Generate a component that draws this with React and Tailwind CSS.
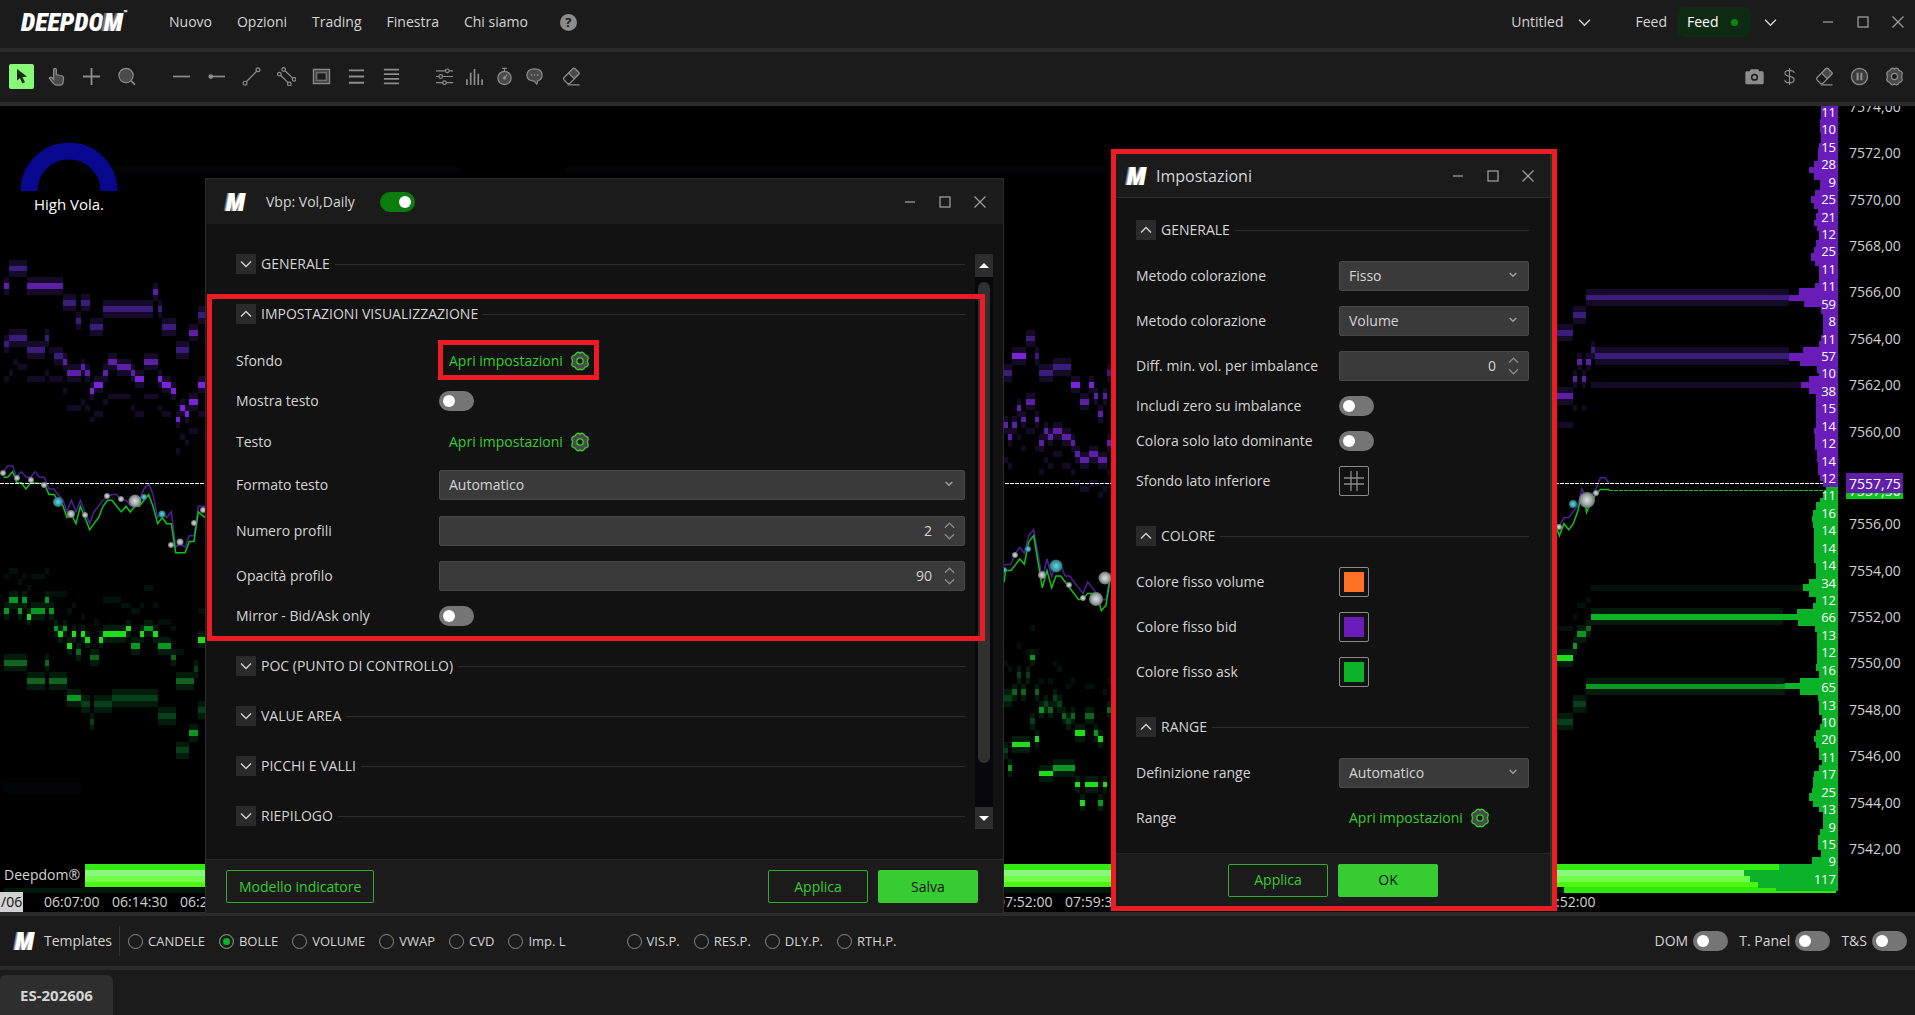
import React, { useState } from "react";

// [x, y, width] in heat map units, y is the top of the strong row
const LEFT_BID = {
  mid: [[27,59,54],[189,138,39],[243,138,27],[228,180,14],[270,194,39],[309,152,150],[474,152,12],[486,194,42],[528,247,39],[594,166,22],[12,233,15],[27,219,54],[81,247,54],[135,219,12],[162,261,27]],
  strong: [[12,99,15],[81,99,108],[459,113,14],[567,207,27],[189,274,12],[201,300,42],[243,287,12],[256,300,14],[309,300,15],[324,274,27],[351,287,42],[393,300,12],[432,274,42]],
  hot: [[270,341,12],[282,327,27],[405,314,27],[474,314,12],[486,327,27],[513,341,15],[528,407,12],[540,380,14],[555,394,12],[567,367,27],[594,327,22]],
  faint: [[12,314,15],[27,300,13],[40,274,14],[54,287,27],[81,314,54],[135,300,12],[147,247,15],[147,314,42],[189,341,12],[201,314,42],[201,380,42],[243,367,12],[256,380,14],[270,407,12],[282,394,27],[309,367,15],[324,354,69],[393,380,12],[405,394,27],[432,354,42],[474,380,12],[486,394,27],[528,480,12],[540,447,14],[555,460,12],[567,434,27],[594,394,22]],
};
const LEFT_ASK = {
  mid: [[228,943,15],[270,956,27],[513,956,14],[12,968,69],[135,968,12],[81,1010,54],[147,1010,54],[528,1010,54]],
  low: [[243,1063,27],[270,1104,12],[282,1063,54],[336,1049,138],[474,1091,54],[582,982,12],[594,1077,22],[528,1170,39]],
  strong: [[27,823,27],[67,823,14],[135,823,12],[12,849,15],[54,849,12],[93,849,42],[147,849,14],[162,889,12],[189,889,12],[393,929,27],[432,889,27],[474,929,39],[201,1049,42],[567,1130,27]],
  hot: [[81,862,12],[174,902,15],[201,929,15],[216,902,12],[243,902,12],[255,915,14],[297,915,12],[309,902,69],[378,889,14],[420,902,12],[459,902,14],[594,915,22]],
  faint: [[27,756,27],[12,769,15],[67,769,14],[93,769,42],[135,756,12],[54,782,12],[81,796,12],[27,809,27],[147,809,54],[201,849,15],[216,836,12],[243,862,12],[282,875,15],[309,823,54],[363,836,30],[393,849,27],[420,836,12],[432,796,27],[459,836,14],[474,875,39],[513,889,14],[513,943,40],[594,849,22]],
};
const MID_BID = {
  mid: [[12,177,24],[78,90,27],[105,134,12],[117,177,42],[159,162,54],[321,177,12]],
  strong: [[240,250,27],[282,236,12],[294,281,15],[309,236,12],[12,309,12],[24,339,12],[36,309,15],[51,266,12],[63,295,15],[78,250,27],[105,295,12],[117,354,15],[132,324,12],[144,339,15],[159,324,27],[186,339,27],[213,354,12],[225,383,15],[240,398,27],[267,383,27],[294,398,27],[321,354,12]],
  hot: [[36,134,42],[213,207,27],[267,207,15]],
  faint: [[12,398,12],[24,412,12],[51,339,12],[63,368,15],[78,324,27],[105,368,12],[117,427,15],[132,398,12],[144,412,15],[159,383,27],[186,412,27],[213,427,12],[225,456,15],[240,470,27],[267,456,27],[294,485,15],[309,470,12],[321,427,12]],
};
const MID_ASK = {
  mid: [[36,985,15],[63,985,14],[105,985,12],[144,1029,15],[186,1044,12],[213,1044,12],[255,1044,27],[321,1029,12]],
  low: [[12,999,24],[51,941,12],[78,941,12],[132,1014,12],[159,999,12],[171,1014,15],[198,1058,15],[90,1058,15],[12,1132,12]],
  strong: [[90,897,15],[117,1029,15],[282,1088,12],[24,1176,12],[159,1176,66],[294,1264,15]],
  hot: [[225,1088,30],[294,1103,15],[105,1103,12],[36,1117,54],[117,1190,42],[225,1218,15],[240,1264,15],[255,1218,39],[309,1218,12]],
  faint: [[90,823,15],[51,868,12],[78,882,12],[105,882,12],[12,912,12],[24,926,12],[159,912,12],[171,926,15],[117,956,15],[144,956,15],[198,970,15],[213,956,12],[255,970,27],[309,985,12],[321,956,12]],
};
const RIGHT_BID = {
  mid: [[51,207,48],[99,166,39],[138,126,609],[153,247,12],[165,261,582]],
  strong: [[51,353,48],[99,314,12],[111,274,14],[126,314,12],[138,274,15]],
  hot: [],
  faint: [[165,327,620],[99,380,12],[126,380,12],[51,420,48],[153,327,12]],
};
const RIGHT_ASK = {
  mid: [[138,889,15]],
  low: [[99,1063,39],[51,1104,48]],
  strong: [[111,902,27],[99,929,12],[138,1023,597],[153,862,576]],
  hot: [[51,957,48]],
  faint: [[153,796,636],[111,836,27],[138,823,15],[99,862,12],[51,889,48]],
};

const BID_SHADES = { mid: "#3a1c7a", strong: "#5c1fa6", hot: "#7a24da", faint: "#140a26", halo: "#150a28" };
const ASK_SHADES = { mid: "#10641f", low: "#06401a", strong: "#0a9824", hot: "#1fdc1c", faint: "#02120a", halo: "#021c0c" };

// [y, left edge], every step keeps its x until the next y
const BID_PROFILE = [[106,1821],[119,1820],[133,1821],[143,1819],[148,1818],[161,1814],[167,1809],[173,1814],[180,1820],[190,1815],[196,1811],[203,1814],[209,1818],[213,1816],[220,1814],[226,1817],[231,1819],[240,1816],[247,1814],[253,1811],[261,1815],[266,1819],[283,1815],[288,1799],[295,1789],[301,1804],[307,1821],[314,1823],[335,1821],[341,1819],[347,1803],[353,1789],[361,1800],[366,1817],[373,1819],[376,1809],[382,1801],[388,1809],[394,1816],[428,1814],[434,1815],[450,1817],[462,1818],[475,1820],[481,1823],[487,1838]];
const ASK_PROFILE = [[487,1826],[492,1823],[498,1820],[502,1816],[510,1813],[516,1812],[522,1813],[528,1814],[563,1816],[579,1809],[584,1803],[591,1809],[597,1816],[603,1813],[609,1797],[614,1783],[620,1798],[626,1815],[632,1817],[664,1816],[671,1819],[678,1800],[683,1785],[689,1800],[695,1818],[701,1819],[715,1822],[724,1820],[730,1816],[736,1814],[742,1816],[748,1819],[760,1822],[765,1819],[771,1814],[777,1813],[788,1812],[793,1809],[801,1813],[807,1819],[812,1823],[829,1820],[835,1818],[850,1821],[857,1812],[864,1779],[870,1744],[876,1750],[882,1758],[888,1776],[891,1838]];

const VOLUMES = [11,10,15,28,9,25,21,12,25,11,11,59,8,11,57,10,38,15,14,12,14,12,11,16,14,14,14,34,12,66,13,12,16,65,13,10,20,11,17,25,13,9,15,9,117];
const PRICES = [7574,7572,7570,7568,7566,7564,7562,7560,0,7556,7554,7552,7550,7548,7546,7544,7542];

const BUBBLES = [
  [3,473,3,"g"],[17,478,3,"g"],[31,480,3,"g"],[44,485,3,"g"],[58,502,5,"t"],[71,514,4,"g"],[85,515,3,"g"],[107,496,3,"g"],[121,499,3,"g"],[135,501,6.5,"g"],[144,497,3,"t"],[162,514,3.5,"t"],[171,545,3,"g"],[180,542,3.5,"g"],[194,523,3,"g"],[203,510,3,"g"],
  [1004,570,3,"t"],[1015,555,3,"g"],[1028,549,3,"t"],[1042,575,4,"g"],[1056,566,6.5,"t"],[1069,585,3,"g"],[1083,598,3,"g"],[1096,599,7,"g"],[1105,578,6.5,"g"],
  [1559,527,3,"g"],[1573,504,4,"t"],[1587,500,8,"g"],[1596,493,3,"g"],
];

function stepPath(steps) {
  let d = `M1838 ${steps[0][0]}`;
  steps.forEach(([y, x], i) => {
    d += `L${x} ${y}`;
    if (i < steps.length - 1) d += `V${steps[i + 1][0]}`;
  });
  return d + "Z";
}

function Heat({ data, shades, row }) {
  const levels = ["mid", "low", "strong", "hot"];
  return (
    <g>
      {data.faint.map(([x, y, w], i) => (
        <rect key={i} x={x} y={y} width={w} height={row} fill={shades.faint} />
      ))}
      {levels.map((lv) =>
        (data[lv] || []).map(([x, y, w], i) => (
          <rect key={lv + i} x={x} y={y - row} width={w} height={row * 3} fill={shades.halo} />
        ))
      )}
      {levels.map((lv) =>
        (data[lv] || []).map(([x, y, w], i) => (
          <rect key={lv + i} x={x} y={y} width={w} height={row} fill={shades[lv]} />
        ))
      )}
    </g>
  );
}

function PriceLines({ bid, ask }) {
  return (
    <g fill="none" strokeWidth="1.5">
      <polyline points={bid} stroke="#4f1f96" vectorEffect="non-scaling-stroke" />
      <polyline points={ask} stroke="#0bc41a" vectorEffect="non-scaling-stroke" />
    </g>
  );
}

function Chart() {
  return (
    <svg
      className="absolute inset-0 h-full w-full font-['Open_Sans',sans-serif] text-[14px]"
      viewBox="0 106 1915 806"
      preserveAspectRatio="xMinYMin slice"
      shapeRendering="crispEdges"
    >
      <defs>
        <radialGradient id="bubble-g">
          <stop offset="0" stopColor="#e0e0e0" />
          <stop offset="0.6" stopColor="#a0a8a8" />
          <stop offset="1" stopColor="#666c6c" />
        </radialGradient>
        <radialGradient id="bubble-t">
          <stop offset="0" stopColor="#58e0e8" />
          <stop offset="0.6" stopColor="#3f9fa8" />
          <stop offset="1" stopColor="#2b6d74" />
        </radialGradient>
      </defs>
      <rect x="0" y="106" width="1915" height="806" fill="#000" />
      <rect x="80" y="167" width="380" height="5" fill="#010505" />
      <rect x="565" y="167" width="640" height="5" fill="#010505" />
      <rect x="4" y="782" width="77" height="11" fill="#010505" />

      <path d="M29 191a40 40 0 0 1 80 0" fill="none" stroke="#08088f" strokeWidth="17" shapeRendering="auto" />
      <text x="69" y="210" textAnchor="middle" fill="#fff" className="text-[15px]">High Vola.</text>

      <g transform="translate(0 240) scale(.3333 .4337)">
        <Heat data={LEFT_BID} shades={BID_SHADES} row={13.4} />
        <Heat data={LEFT_ASK} shades={ASK_SHADES} row={13.4} />
      </g>
      <g transform="translate(1000 300) scale(.3333 .3954)">
        <Heat data={MID_BID} shades={BID_SHADES} row={14.7} />
        <Heat data={MID_ASK} shades={ASK_SHADES} row={14.7} />
      </g>
      <g transform="translate(1540 240) scale(.3333 .4337)">
        <Heat data={RIGHT_BID} shades={BID_SHADES} row={13.4} />
        <Heat data={RIGHT_ASK} shades={ASK_SHADES} row={13.4} />
        <rect x="153" y="862" width="576" height="14" fill="#0db428" />
      </g>

      <g shapeRendering="auto">
        <g transform="translate(0 240) scale(.3333 .4337)">
          <PriceLines
            bid="10,534 23,521 38,521 50,547 64,534 78,547 92,547 105,534 119,547 133,547 147,574 162,574 174,587 189,600 201,627 214,600 228,627 241,600 255,627 269,654 282,627 296,613 309,600 323,592 336,587 350,587 364,600 378,600 391,613 405,590 418,600 432,574 446,562 459,587 473,640 487,627 500,640 514,627 527,708 541,700 555,708 568,682 582,682 595,614 616,614"
            ask="10,547 23,547 38,534 50,560 64,560 78,574 92,560 133,562 147,587 162,587 174,600 189,613 201,640 214,632 228,654 241,614 255,640 269,668 282,654 296,640 309,614 323,600 336,600 350,614 364,627 378,614 391,627 405,614 418,614 432,600 446,587 459,614 473,654 487,640 500,654 514,654 527,721 555,721 568,695 582,695 595,627 616,640"
          />
        </g>
        <g transform="translate(1000 300) scale(.3333 .3954)">
          <PriceLines
            bid="12,670 33,668 46,640 59,626 73,640 86,596 101,581 127,705 141,655 155,700 168,665 182,670 195,698 209,698 236,728 249,742 263,713 277,728 290,742 304,758 318,758 332,690"
            ask="12,714 17,684 33,684 46,670 59,655 73,668 86,612 101,596 127,728 141,684 155,728 168,698 182,698 236,758 249,756 263,742 290,742 304,786 318,772 332,698"
          />
        </g>
        <g transform="translate(1540 240) scale(.3333 .4337)">
          <PriceLines
            bid="52,654 58,660 72,640 86,640 100,626 113,613 126,574 140,600 155,587 168,574 181,548 195,548 208,561"
            ask="52,668 58,682 72,654 86,668 100,654 113,626 121,600 133,600 140,628 155,600 168,587 181,575 208,575"
          />
        </g>
      </g>
      <path d="M0 483.5H1826" stroke="#fff" strokeDasharray="4 1" />
      <path d="M1609 490.5H1826" stroke="#0bc41a" strokeDasharray="4 1" />
      <g shapeRendering="auto">
        {BUBBLES.map(([x, y, r, kind], i) => (
          <circle key={i} cx={x} cy={y} r={r} fill={kind === "t" ? "url(#bubble-t)" : "url(#bubble-g)"} />
        ))}
      </g>

      {/* liquidity band at the bottom */}
      <rect x="85" y="864" width="1740" height="6" fill="#33ea12" />
      <rect x="85" y="870" width="1665" height="6" fill="#8af67d" />
      <rect x="85" y="876" width="1670" height="6" fill="#70fc4a" />
      <rect x="85" y="882" width="1680" height="5" fill="#4cf80e" />
      <rect x="4" y="888" width="1560" height="5" fill="#02180a" />
      <rect x="1564" y="887" width="272" height="6" fill="#30e810" />

      <path d={stepPath(BID_PROFILE)} fill="#6a1cb8" />
      <path d={stepPath(ASK_PROFILE)} fill="#0cb228" />
      <g fill="#fff" textAnchor="end" className="text-[13px]">
        {VOLUMES.map((v, i) => (
          <text key={i} x="1836" y={117 + i * 17.43}>{v}</text>
        ))}
      </g>

      <g fill="#d2d2d2">
        {PRICES.map((p, i) => p > 0 && (
          <text key={p} x="1849" y={112 + i * 46.37}>{p},00</text>
        ))}
        <rect x="1846" y="480" width="57" height="19" fill="#0bc41a" />
        <text x="1849" y="496" fill="#fff">7557,50</text>
        <rect x="1846" y="473" width="57" height="20" fill="#5c1fa6" />
        <text x="1849" y="489" fill="#fff">7557,75</text>

        <text x="4" y="880">Deepdom®</text>
        <rect x="0" y="892" width="23" height="20" fill="#d2d2d2" />
        <text x="1" y="907" fill="#111">/06</text>
        <text x="44" y="907">06:07:00</text>
        <text x="112" y="907">06:14:30</text>
        <text x="180" y="907">06:22:00</text>
        <text x="997" y="907">07:52:00</text>
        <text x="1065" y="907">07:59:30</text>
        <text x="1540" y="907">08:52:00</text>
      </g>
    </svg>
  );
}

function Icon({ children, size = 20, className = "" }) {
  return (
    <svg width={size} height={size} viewBox="0 0 20 20" fill="none" stroke="currentColor" strokeWidth="1.3" className={className} aria-hidden="true">
      {children}
    </svg>
  );
}

const GearShape = () => (
  <>
    <path
      d="M10 2.200C11.300.6 13.700 1.100 14.400 2.900C14.700 3.700 15 3.900 15.800 4.100C17.900 4.500 18.800 6.600 17.900 8.200C17.400 9.200 17.400 10.800 17.900 11.800C18.800 13.400 17.900 15.500 15.800 15.900C15 16.100 14.700 16.300 14.400 17.100C13.700 18.900 11.300 19.400 10 17.800C8.700 19.400 6.300 18.900 5.600 17.100C5.300 16.300 5 16.100 4.200 15.900C2.100 15.500 1.200 13.400 2.100 11.800C2.600 10.800 2.600 9.200 2.100 8.200C1.200 6.600 2.100 4.500 4.200 4.100C5 3.900 5.300 3.700 5.600 2.900C6.300 1.100 8.700.6 10 2.200Z"
      fill="#4a4a4a"
    />
    <circle cx="10" cy="10" r="3.200" fill="#1b1b1b" />
  </>
);

const Eraser = () => (
  <>
    <path d="M3 14.500 2 13.300a1.500 1.500 0 0 1 0-2L11.500 1.800a1.500 1.500 0 0 1 2 0l4 4a1.500 1.500 0 0 1 0 2L8 17.500H6Z" />
    <path d="m7 6.500 5.800 5.800 4.700-4.700a1.500 1.500 0 0 0 0-2l-4-4a1.500 1.500 0 0 0-2 0Z" fill="#4a4a4a" />
    <path d="M6 18.800h12.500" />
  </>
);

const TOOLS_A = [
  { name: "Mano", art: <path d="M7 11V2.800a1.400 1.400 0 0 1 2.800 0V8l5.500 1.200c1.500.3 2.200 1.300 2.100 2.700l-.4 4.100c-.2 1.800-1.400 3-3.200 3H10c-1.300 0-2.200-.5-3-1.600L2.400 11.800c.7-1.300 2.300-1.400 3.200-.3L7 13Z" fill="#4a4a4a" /> },
  { name: "Croce", art: <path d="M10 1v18M1 10h18" strokeWidth="2" /> },
  { name: "Zoom", art: <><circle cx="9.500" cy="9" r="7.500" fill="#4a4a4a" /><path d="m15 14.500 3.800 4" strokeWidth="1.800" /></> },
];
const TOOLS_B = [
  { name: "Linea orizzontale", art: <path d="M1 10h18" strokeWidth="1.800" /> },
  { name: "Semiretta", art: <><circle cx="4" cy="10" r="2.500" fill="currentColor" stroke="none" /><path d="M4 10h15" strokeWidth="1.800" /></> },
  { name: "Linea di tendenza", art: <><circle cx="3.200" cy="17" r="2" /><circle cx="16.800" cy="3" r="2" /><path d="M4.600 15.500 15.400 4.500" /></> },
  { name: "Canale", art: <><circle cx="7" cy="2.600" r="1.900" /><circle cx="18" cy="13" r="1.900" /><circle cx="2.500" cy="7.500" r="1.900" /><circle cx="13" cy="17.800" r="1.900" /><path d="m8.400 4 8.200 7.700M4 8.900l7.600 7.500" /></> },
  { name: "Rettangolo", art: <><rect x="1.500" y="2.500" width="17" height="15" fill="#4a4a4a" /><rect x="5" y="6" width="10" height="8" fill="#1b1b1b" stroke="#777" /></> },
  { name: "Tre linee", art: <path d="M2 3.500h16M2 10h16M2 16.500h16" strokeWidth="2" /> },
  { name: "Quattro linee", art: <path d="M2 2.800h16M2 7.600h16M2 12.400h16M2 17.200h16" strokeWidth="1.800" /> },
];
const TOOLS_C = [
  { name: "Regolazioni", art: <><path d="M1 4h10M15 4h4M1 10h3M8 10h11M1 16.500h7M12 16.500h7" /><circle cx="13" cy="4" r="1.900" /><circle cx="6" cy="10" r="1.900" /><circle cx="10" cy="16.500" r="1.900" /></> },
  { name: "Volumi", art: <path d="M2 13v6M6 6v13M10 2v17M14 7v12M18 13v6" strokeWidth="1.800" /> },
  { name: "Timer", art: <><circle cx="10" cy="11.500" r="7" fill="#4a4a4a" /><path d="M7.500 1.500h5M10 1.500v3M10 11.500l3-3.500" /><circle cx="10" cy="11.500" r="1" fill="currentColor" /></> },
  { name: "Commenti", art: <><path d="M10 2c5 0 8 2.500 8 6.500S15.500 14 13.500 14.500L12.500 18l-3-3.200C5 14.700 2 12.500 2 8.500S5 2 10 2Z" fill="#4a4a4a" /><path d="M6 8.500h1.500M9.300 8.500h1.500M12.600 8.500h1.500" strokeWidth="1.600" /></> },
];
const TOOLS_RIGHT = [
  { name: "Istantanea", art: <><path d="M6.500 3h7l1 2H18a1 1 0 0 1 1 1v10.500a1 1 0 0 1-1 1H2a1 1 0 0 1-1-1V6a1 1 0 0 1 1-1h3.500Z" fill="currentColor" /><circle cx="10" cy="10.800" r="3" stroke="#1b1b1b" strokeWidth="1.600" /></> },
  { name: "Conto", art: <path d="M10 1v18M14.800 6.200C14.800 4.400 12.800 3.500 10 3.500S5.200 4.700 5.200 6.600c0 4.300 9.700 2.300 9.700 6.700 0 2-2.100 3.200-4.900 3.200s-5-1.100-5-3.200" strokeWidth="1.200" /> },
  { name: "Cancella", art: <Eraser /> },
  { name: "Pausa", art: <><circle cx="10" cy="10" r="8.500" fill="#3c3c3c" /><path d="M8 6v8M12 6v8" strokeWidth="2.200" /></> },
  { name: "Impostazioni", art: <GearShape /> },
];

function Tool({ tool, className = "" }) {
  return (
    <button aria-label={tool.name} className={`flex h-[25px] w-[25px] items-center justify-center text-[#8c8c8c] ${className}`}>
      <Icon size={19}>{tool.art}</Icon>
    </button>
  );
}

function Mark() {
  return (
    <span aria-hidden="true" className="w-5 font-['Roboto_Condensed','Liberation_Sans',sans-serif] text-[26px] leading-5 font-black text-white italic [text-shadow:-1px_0_0_#aaa,-2px_0_0_#6b6b6b]">
      M
    </span>
  );
}

function Chevron({ up = false, size = 12, className = "" }) {
  return (
    <svg width={size} height={size} viewBox="0 0 12 12" fill="none" stroke="currentColor" strokeWidth="1.3" className={className} aria-hidden="true">
      <path d={up ? "M1 8.500 6 3.500l5 5" : "M1 3.500l5 5 5-5"} />
    </svg>
  );
}

function WindowButtons() {
  return (
    <div className="flex gap-[15px] text-[#9a9a9a]">
      <button aria-label="Riduci" className="flex h-5 w-5 items-center justify-center">
        <Icon><path d="M5 10h10" /></Icon>
      </button>
      <button aria-label="Ingrandisci" className="flex h-5 w-5 items-center justify-center">
        <Icon><rect x="5" y="5" width="10" height="10" /></Icon>
      </button>
      <button aria-label="Chiudi" className="flex h-5 w-5 items-center justify-center">
        <Icon><path d="m4.500 4.500 11 11M15.500 4.500l-11 11" /></Icon>
      </button>
    </div>
  );
}

function Toggle({ id, label, defaultChecked = false }) {
  return (
    <input
      id={id}
      type="checkbox"
      role="switch"
      aria-label={label}
      defaultChecked={defaultChecked}
      className="relative h-5 w-[35px] shrink-0 appearance-none rounded-full bg-[#757575] before:absolute before:top-1 before:left-1 before:h-3 before:w-3 before:rounded-full before:bg-white checked:bg-[#0a7d0c] checked:before:left-[19px]"
    />
  );
}

function Section({ title, open = false }) {
  return (
    <div className="flex h-5 items-center">
      <button aria-label={title} aria-expanded={open} className="flex h-5 w-5 items-center justify-center bg-[#2a2a2a]">
        <Chevron up={open} />
      </button>
      <h2 className="ml-[5px]">{title}</h2>
      <div className="ml-[5px] h-px flex-1 bg-[#2c2c2c]"></div>
    </div>
  );
}

function Row({ label, id, height = "h-[45px]", children }) {
  return (
    <div className={`flex items-center ${height}`}>
      <label htmlFor={id} className="w-[203px] shrink-0 whitespace-nowrap">{label}</label>
      {children}
    </div>
  );
}

function Select({ id, options }) {
  return (
    <div className="relative flex-1">
      <select id={id} className="h-[30px] w-full appearance-none rounded-xs border border-[#484848] bg-[#3a3a3a] px-[9px]">
        {options.map((o) => (
          <option key={o}>{o}</option>
        ))}
      </select>
      <svg width="8" height="6" viewBox="0 0 8 6" fill="none" stroke="#a0a0a0" strokeWidth="1.5" className="pointer-events-none absolute top-[11px] right-3" aria-hidden="true">
        <path d="m.7 1 3.300 3.300L7.300 1" />
      </svg>
    </div>
  );
}

function NumberBox({ id, value }) {
  const [num, setNum] = useState(value);
  return (
    <div className="relative flex-1">
      <input
        id={id}
        type="text"
        inputMode="numeric"
        value={num}
        onChange={(e) => setNum(e.target.value)}
        className="h-[30px] w-full rounded-xs border border-[#484848] bg-[#3a3a3a] pr-8 text-right"
      />
      <div className="absolute top-1 right-[10px] flex flex-col text-[#8a8a8a]">
        <Chevron up size={11} />
        <Chevron size={11} />
      </div>
    </div>
  );
}

function OpenSettings({ id }) {
  return (
    <button id={id} className="ml-[10px] flex items-center gap-[7px] text-[#38cc33]">
      Apri impostazioni
      <Icon><GearShape /></Icon>
    </button>
  );
}

function Swatch({ id, children }) {
  return (
    <button id={id} className="flex h-[30px] w-[30px] items-center justify-center rounded-xs border border-[#8a8a8a] text-[#8a8a8a]">
      {children}
    </button>
  );
}

const OUTLINE_BTN = "h-[33px] rounded-xs border border-[#2fae2b] text-[#38cc33]";
const SOLID_BTN = "h-[33px] rounded-xs bg-[#38cc33] text-[#121212]";

function VbpDialog() {
  return (
    <section className="absolute top-[178px] left-[205px] w-[799px] border border-[#2d2d2d] bg-[#121212]">
      <header className="flex h-[45px] items-center bg-[#1b1b1b] pr-[13px] pl-5">
        <Mark />
        <h1 className="ml-5 w-[114px] whitespace-nowrap">Vbp: Vol,Daily</h1>
        <Toggle id="vbp-on" label="Vbp: Vol,Daily" defaultChecked />
        <div className="ml-auto"><WindowButtons /></div>
      </header>
      <div className="flex pt-[30px] pr-[10px] pb-[30px] pl-[30px]">
        <div className="flex-1 pb-[3px]">
          <Section title="GENERALE" />
          <div className="h-[30px]"></div>
          <Section title="IMPOSTAZIONI VISUALIZZAZIONE" open />
          <div className="pt-4 pb-[22px]">
            <Row label="Sfondo" id="sfondo" height="h-[41px]"><OpenSettings id="sfondo" /></Row>
            <Row label="Mostra testo" id="mostra" height="h-10"><Toggle id="mostra" /></Row>
            <Row label="Testo" id="testo" height="h-[41px]"><OpenSettings id="testo" /></Row>
            <Row label="Formato testo" id="formato" height="h-[46px]"><Select id="formato" options={["Automatico"]} /></Row>
            <Row label="Numero profili" id="numero"><NumberBox id="numero" value="2" /></Row>
            <Row label="Opacità profilo" id="opacita"><NumberBox id="opacita" value="90" /></Row>
            <Row label="Mirror - Bid/Ask only" id="mirror" height="h-9"><Toggle id="mirror" /></Row>
          </div>
          <div className="flex flex-col gap-[30px]">
            <Section title="POC (PUNTO DI CONTROLLO)" />
            <Section title="VALUE AREA" />
            <Section title="PICCHI E VALLI" />
            <Section title="RIEPILOGO" />
          </div>
        </div>
        <div className="ml-[10px] flex w-[18px] flex-col bg-[#07070c]">
          <button aria-label="Scorri su" className="flex h-[23px] items-center justify-center bg-[#2d2d2d]">
            <svg width="10" height="5" viewBox="0 0 10 5"><path d="M0 5l5-5 5 5Z" fill="#fff" /></svg>
          </button>
          <div className="mx-[3px] mt-[5px] mb-[44px] flex-1 rounded-full bg-[#303030]"></div>
          <button aria-label="Scorri giù" className="flex h-[22px] items-center justify-center bg-[#2d2d2d]">
            <svg width="10" height="5" viewBox="0 0 10 5"><path d="M0 0l5 5 5-5Z" fill="#fff" /></svg>
          </button>
        </div>
      </div>
      <footer className="flex h-[54px] items-center gap-[10px] border-t border-[#2a2a2a] bg-[#1b1b1b] pr-[25px] pl-5">
        <button className={`mr-auto px-3 ${OUTLINE_BTN}`}>Modello indicatore</button>
        <button className={`w-[100px] ${OUTLINE_BTN}`}>Applica</button>
        <button className={`w-[100px] ${SOLID_BTN}`}>Salva</button>
      </footer>
    </section>
  );
}

function SettingsDialog() {
  return (
    <section className="absolute top-[149px] left-[1111px] w-[446px] border-5 border-[#ed1c24] bg-[#121212]">
      <div className="border-r-2 border-[#1f3a1c]">
        <header className="flex h-11 items-center border-b border-[#2a2a2a] bg-[#1b1b1b] pr-3 pl-[11px]">
          <Mark />
          <h1 className="ml-[9px] text-[16px]">Impostazioni</h1>
          <div className="ml-auto"><WindowButtons /></div>
        </header>
        <div className="pt-[22px] pr-[21px] pb-[13px] pl-5">
          <Section title="GENERALE" open />
          <div className="pt-[13px] pb-[23px]">
            <Row label="Metodo colorazione" id="metodo1"><Select id="metodo1" options={["Fisso"]} /></Row>
            <Row label="Metodo colorazione" id="metodo2"><Select id="metodo2" options={["Volume"]} /></Row>
            <Row label="Diff. min. vol. per imbalance" id="diff"><NumberBox id="diff" value="0" /></Row>
            <Row label="Includi zero su imbalance" id="zero" height="h-[35px]"><Toggle id="zero" /></Row>
            <Row label="Colora solo lato dominante" id="dominante" height="h-[35px]"><Toggle id="dominante" /></Row>
            <Row label="Sfondo lato inferiore" id="inferiore">
              <Swatch id="inferiore"><Icon><path d="M7 0v20M13 0v20M0 7h20M0 13h20" /></Icon></Swatch>
            </Row>
          </div>
          <Section title="COLORE" open />
          <div className="pt-[13px] pb-[23px]">
            <Row label="Colore fisso volume" id="c-volume"><Swatch id="c-volume"><span className="h-5 w-5 bg-[#ff7226]"></span></Swatch></Row>
            <Row label="Colore fisso bid" id="c-bid"><Swatch id="c-bid"><span className="h-5 w-5 bg-[#6a1cb8]"></span></Swatch></Row>
            <Row label="Colore fisso ask" id="c-ask"><Swatch id="c-ask"><span className="h-5 w-5 bg-[#0cb228]"></span></Swatch></Row>
          </div>
          <Section title="RANGE" open />
          <div className="pt-[13px]">
            <Row label="Definizione range" id="def-range"><Select id="def-range" options={["Automatico"]} /></Row>
            <Row label="Range" id="range"><OpenSettings id="range" /></Row>
          </div>
        </div>
        <footer className="flex h-[53px] items-center justify-center gap-[10px] border-t border-[#242424] bg-[#1b1b1b]">
          <button className={`w-[100px] ${OUTLINE_BTN}`}>Applica</button>
          <button className={`w-[100px] ${SOLID_BTN}`}>OK</button>
        </footer>
      </div>
    </section>
  );
}

function TemplateRadio({ name, checked = false }) {
  return (
    <label className="flex items-center gap-[5px]">
      <input
        type="radio"
        name="template"
        defaultChecked={checked}
        className="h-[15px] w-[15px] appearance-none rounded-full border border-[#8a8a8a] checked:bg-[#0cb228] checked:shadow-[inset_0_0_0_3px_#1b1b1b]"
      />
      {name}
    </label>
  );
}

export default function App() {
  const menu = ["Nuovo", "Opzioni", "Trading", "Finestra", "Chi siamo"];
  const templates = ["CANDELE", "BOLLE", "VOLUME", "VWAP", "CVD", "Imp. L"];
  const profiles = ["VIS.P.", "RES.P.", "DLY.P.", "RTH.P."];
  return (
    <div className="relative flex h-screen flex-col overflow-hidden bg-[#1b1b1b] font-['Open_Sans',sans-serif] text-[14px] leading-5 text-[#d4d4d4]">
      <header className="flex h-[52px] shrink-0 items-center border-b-4 border-[#2a2a2a] pr-[7px] pb-1 pl-[21px]">
        <div className="flex w-[148px] items-start font-['Roboto_Condensed','Liberation_Sans',sans-serif] text-[26px] leading-6 font-black text-white italic">
          <span>DEEPDO</span>
          <span className="[text-shadow:-2px_0_0_#777,-3px_0_0_#444]">M</span>
          <span className="text-[8px] leading-2">™</span>
        </div>
        <nav className="flex items-center gap-[25px]">
          {menu.map((m) => (
            <a key={m} href="#">{m}</a>
          ))}
        </nav>
        <button aria-label="Aiuto" className="ml-8 flex h-[17px] w-[17px] items-center justify-center rounded-full bg-[#8c8c8c] text-[13px] leading-4 font-bold text-[#1b1b1b]">?</button>
        <div className="ml-auto flex items-center">
          <span>Untitled</span>
          <Chevron size={13} className="mr-[44px] ml-[15px]" />
          <span>Feed</span>
          <button className="ml-[10px] flex h-[30px] w-[74px] items-center rounded-lg bg-[#0f2a12] pl-[10px] text-white">
            Feed
            <span className="ml-3 h-[7px] w-[7px] rounded-full bg-[#0a8a0a]"></span>
          </button>
          <Chevron size={13} className="mr-[41px] ml-[13px]" />
          <WindowButtons />
        </div>
      </header>

      <div className="flex h-[54px] shrink-0 items-center border-b-4 border-[#2a2a2a] pr-2 pb-[2px] pl-[9px]">
        <div className="flex gap-[10px]">
          <button aria-label="Selezione" className="flex h-[25px] w-[25px] items-center justify-center rounded-xs bg-[#88f878]">
            <svg width="12" height="15" viewBox="0 0 12 15"><path d="M1 0v11.500l3-2.300 2.400 5.300 2.600-1.200-2.500-5L11 7.500Z" fill="#1b2b1b" /></svg>
          </button>
          {TOOLS_A.map((t) => <Tool key={t.name} tool={t} />)}
        </div>
        <div className="ml-[30px] flex gap-[10px]">
          {TOOLS_B.map((t) => <Tool key={t.name} tool={t} />)}
        </div>
        <div className="ml-7 flex gap-[5px]">
          {TOOLS_C.map((t) => <Tool key={t.name} tool={t} />)}
        </div>
        <Tool tool={{ name: "Gomma", art: <Eraser /> }} className="ml-3" />
        <div className="ml-auto flex gap-[10px]">
          {TOOLS_RIGHT.map((t) => <Tool key={t.name} tool={t} />)}
        </div>
      </div>

      <main className="relative flex-1">
        <Chart />
      </main>

      <div className="flex h-[58px] shrink-0 items-center border-y-4 border-[#2a2a2a] pr-2 pl-[15px]">
        <Mark />
        <span className="ml-[9px] w-[75px]">Templates</span>
        <div className="mr-2 h-[30px] w-px bg-[#333]"></div>
        <div className="flex gap-[14px] text-[13px]">
          {templates.map((t) => <TemplateRadio key={t} name={t} checked={t === "BOLLE"} />)}
        </div>
        <div className="ml-[61px] flex gap-[14px] text-[13px]">
          {profiles.map((t) => <TemplateRadio key={t} name={t} />)}
        </div>
        <div className="ml-auto flex gap-[11px]">
          {["DOM", "T. Panel", "T&S"].map((t) => (
            <label key={t} className="flex items-center gap-[5px]">
              {t}
              <Toggle />
            </label>
          ))}
        </div>
      </div>
      <footer className="flex h-[45px] shrink-0 items-end">
        <button className="h-10 rounded-t-md bg-[#2e2e2e] px-5 text-[15px] font-bold">ES-202606</button>
      </footer>

      <VbpDialog />
      <SettingsDialog />

      {/* highlighted areas */}
      <div className="pointer-events-none absolute top-[294px] left-[207px] h-[347px] w-[778px] border-5 border-[#ed1c24]"></div>
      <div className="pointer-events-none absolute top-[340px] left-[438px] h-[40px] w-[161px] border-5 border-[#ed1c24]"></div>
    </div>
  );
}
